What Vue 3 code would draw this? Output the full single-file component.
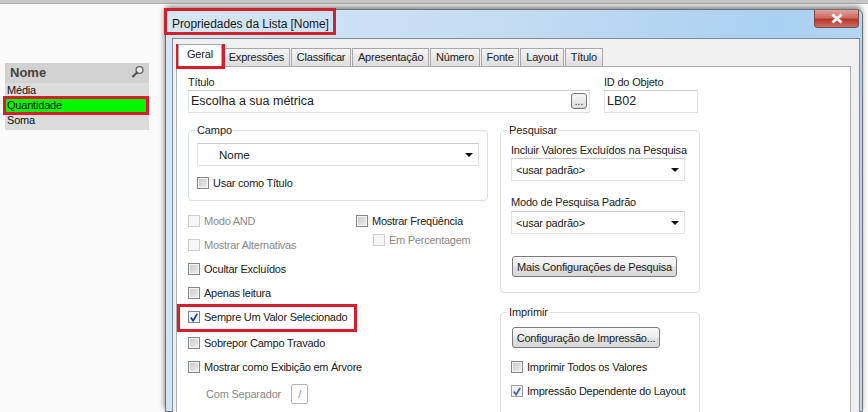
<script setup>
const tabs = ['Geral', 'Expressões', 'Classificar', 'Apresentação', 'Número', 'Fonte', 'Layout', 'Título']
const leftChecks = [
  { t: 'Modo AND', dis: true },
  { t: 'Mostrar Alternativas', dis: true },
  { t: 'Ocultar Excluídos' },
  { t: 'Apenas leitura' },
  { t: 'Sempre Um Valor Selecionado', on: true },
  { t: 'Sobrepor Campo Travado' },
  { t: 'Mostrar como Exibição em Árvore' }
]
</script>

<template>
  <div class="desk">
    <div class="topbar"></div>
    <div class="workspace">
      <aside class="listbox">
        <div class="lb-head">
          <span>Nome</span>
          <svg width="14" height="14" viewBox="0 0 14 14"><circle cx="8.500" cy="5" r="3.400" fill="#eee" stroke="#666" stroke-width="1.400"/><path d="M6 7.500 2 11.500" stroke="#555" stroke-width="2.200" stroke-linecap="round"/></svg>
        </div>
        <div class="lb-row">Média</div>
        <div class="lb-row sel">Quantidade</div>
        <div class="lb-row">Soma</div>
      </aside>

      <section class="dialog">
        <header class="titlebar">
          <span>Propriedades da Lista [Nome]</span>
          <button class="close">
            <svg width="14" height="11" viewBox="0 0 14 11"><path d="M2.500 1.500 11.500 9.500M11.500 1.500 2.500 9.500" stroke="#fff" stroke-width="3"/></svg>
          </button>
        </header>
        <div class="frame">
          <nav class="tabs">
            <div v-for="(t, i) in tabs" :key="t" class="tab" :class="{ active: i === 0 }">{{ t }}</div>
          </nav>
          <div class="pane">
            <div class="title-row">
              <div class="f-title">
                <label>Título</label>
                <div class="input big">
                  <span>Escolha a sua métrica</span>
                  <button class="dots">...</button>
                </div>
              </div>
              <div class="f-id">
                <label>ID do Objeto</label>
                <div class="input"><span>LB02</span></div>
              </div>
            </div>

            <div class="columns">
              <div class="col-left">
                <fieldset class="group campo">
                  <legend>Campo</legend>
                  <div class="select nome"><span>Nome</span><i class="caret"></i></div>
                  <div class="chk"><b class="box"></b>Usar como Título</div>
                </fieldset>

                <div class="checks">
                  <div class="check-list">
                    <div v-for="c in leftChecks" :key="c.t" class="chk" :class="{ dis: c.dis }">
                      <b class="box" :class="{ on: c.on }">
                        <svg v-if="c.on" width="11" height="11" viewBox="0 0 11 11"><path d="M2 5.500 4.500 9 9 1.500" fill="none" stroke="#1c3f94" stroke-width="2"/></svg>
                      </b>{{ c.t }}
                    </div>
                    <div class="sep dis-text">Com Separador <span class="sep-box">/</span></div>
                  </div>
                  <div class="freq">
                    <div class="chk"><b class="box"></b>Mostrar Freqüência</div>
                    <div class="chk dis sub"><b class="box"></b>Em Percentagem</div>
                  </div>
                </div>
              </div>

              <div class="col-right">
                <fieldset class="group pesq">
                  <legend>Pesquisar</legend>
                  <label>Incluir Valores Excluídos na Pesquisa</label>
                  <div class="select"><span>&lt;usar padrão&gt;</span><i class="caret"></i></div>
                  <label class="second">Modo de Pesquisa Padrão</label>
                  <div class="select"><span>&lt;usar padrão&gt;</span><i class="caret"></i></div>
                  <button class="btn more">Mais Configurações de Pesquisa</button>
                </fieldset>
                <fieldset class="group impr">
                  <legend>Imprimir</legend>
                  <button class="btn conf">Configuração de Impressão...</button>
                  <div class="chk"><b class="box"></b>Imprimir Todos os Valores</div>
                  <div class="chk"><b class="box soft">
                    <svg width="11" height="11" viewBox="0 0 11 11"><path d="M2 5.500 4.500 9 9 1.500" fill="none" stroke="#4a5fa5" stroke-width="2"/></svg>
                  </b>Impressão Dependente do Layout</div>
                </fieldset>
              </div>
            </div>
          </div>
        </div>
      </section>
    </div>

    <div class="mark m-title"></div>
    <div class="mark m-tab"></div>
    <div class="mark m-list"></div>
    <div class="mark m-check"></div>
  </div>
</template>

<style>
html, body { margin: 0; padding: 0; background: #fff; }
</style>

<style scoped>
.desk {
  position: relative;
  width: 868px;
  height: 412px;
  overflow: hidden;
  background: #fafafa;
  font: 11px "Liberation Sans", Arial, sans-serif;
  color: #222;
}
.topbar { height: 4px; background: #c6c8c8; border-bottom: 1px solid #b0b2b2; box-sizing: border-box; }
.workspace { display: flex; align-items: flex-start; height: 408px; }

.listbox { width: 144px; margin: 59px 16px 0 5px; background: #dcdcdc; padding-bottom: 2px; flex: none; }
.lb-head {
  height: 20px; background: #d2d2d2; display: flex; align-items: center; justify-content: space-between;
  padding: 0 4px 2px 5px; box-sizing: border-box; font-size: 13px; font-weight: bold; color: #444;
}
.lb-row { height: 15px; line-height: 15px; padding-left: 2px; color: #111; font-size: 11px; letter-spacing: -.2px; }
.lb-row.sel { background: #00f800; margin: 0 3px 0 1px; padding-left: 1px; }

.dialog {
  width: 698px; height: 403px; margin-top: 5px; flex: none; box-sizing: border-box;
  background: linear-gradient(100deg, #d6e6f4 0%, #c3dcf2 45%, #a9d0f2 80%, #bcd9f2 100%);
  border: 1px solid #6b6f73; border-radius: 6px 6px 0 0;
  box-shadow: -1px -3px 5px rgba(60, 60, 60, .55);
  padding: 0 2px 0 6px;
}
.titlebar { height: 28px; display: flex; justify-content: space-between; align-items: flex-start; }
.titlebar > span { margin: 7px 0 0 0; font-size: 12px; color: #1a1a1a; white-space: nowrap; letter-spacing: -.07px; }
.close {
  width: 45px; height: 18px; padding: 0; margin-right: 1px; border: 1px solid #7a4a4a; border-top: 0;
  border-radius: 0 0 4px 4px; display: flex; align-items: center; justify-content: center;
  background: linear-gradient(#e2a39c 0%, #cf6a60 45%, #b8352b 55%, #cc6f64 100%);
}
.frame { height: 375px; box-sizing: border-box; background: #f0f0f0; border: 1px solid #7f8c98; border-bottom: 0; padding: 6px 8px 0 3px; }
.tabs { display: flex; height: 21px; align-items: flex-end; padding-left: 2px; }
.tab {
  height: 18px; box-sizing: border-box; line-height: 17px; padding: 0 4.800px; margin-left: 1px;
  background: linear-gradient(#f6f6f6, #dcdcdc); border: 1px solid #a8a8a8; border-bottom: 0;
  font-size: 11px; color: #222; white-space: nowrap; letter-spacing: -.2px;
}
.tab.active { height: 22px; line-height: 19px; background: #fff; padding: 0 8px; position: relative; z-index: 1; margin-left: 0; }
.pane { height: 346px; background: #fff; border: 1px solid #a9b0b6; border-bottom: 0; box-sizing: border-box; padding: 8px 0 0 11px; }

.title-row { display: flex; gap: 14px; }
label { display: block; line-height: 15px; font-size: 11px; color: #222; white-space: nowrap; letter-spacing: -.2px; }
.input { height: 23px; box-sizing: border-box; border: 1px solid #e0e3e6; border-top-color: #c9cdd0; display: flex; align-items: center; justify-content: space-between; padding: 0 2px 1px; font-size: 12.500px; }
.f-title { width: 402px; }
.f-id { width: 94px; }
.dots { width: 16px; height: 16px; padding: 0; font: 10px "Liberation Sans", sans-serif; border: 1px solid #777; border-radius: 3px; background: linear-gradient(#f7f7f7, #dcdcdc); color: #333; }

.columns { display: flex; gap: 12px; margin-top: 10px; }
.col-left { width: 300px; }
.col-right { width: 200px; }

.group { margin: 0; border: 1px solid #dcdfe3; border-radius: 4px; padding: 0; box-sizing: border-box; min-width: 0; }
.group legend { padding: 0 1px 0 2px; font-size: 11px; line-height: 14px; letter-spacing: -.1px; }
.group.campo { height: 78px; padding: 0 8px; }
.campo legend { margin-left: -2px; }
.pesq legend, .impr legend { margin-left: -4px; }
.select { height: 23px; box-sizing: border-box; border: 1px solid #e2e4e7; border-top-color: #c9cdd0; display: flex; align-items: center; justify-content: space-between; padding: 0 4px; font-size: 11px; letter-spacing: -.2px; }
.select.nome { margin-top: 6px; padding-left: 21px; font-size: 11.500px; letter-spacing: 0; }
.caret { width: 0; height: 0; border: 4px solid transparent; border-top: 4px solid #111; border-bottom: 0; margin-right: 1px; }

.chk { display: flex; align-items: center; gap: 4px; height: 14px; font-size: 11px; color: #222; white-space: nowrap; letter-spacing: -.25px; }
.campo .chk { margin-top: 10px; }
.box {
  width: 12px; height: 12px; box-sizing: border-box; flex: none; display: inline-flex; align-items: center; justify-content: center;
  border: 1px solid #858686; background: linear-gradient(135deg, #c8c8c8, #f0f0f0); box-shadow: inset 0 0 0 1px #f4f4f4;
}
.box.on { background: #eef3fb; }
.box.soft { border-color: #a0a0a0; background: #ececf4; }
.dis { color: #8b8b8b; }
.dis .box { border-color: #cfcfcf; background: #f6f6f6; box-shadow: none; }

.checks { display: flex; margin-top: 13px; }
.check-list { width: 168px; display: flex; flex-direction: column; gap: 10px; }
.check-list .chk:nth-child(6) { margin-top: 2px; }
.freq { display: flex; flex-direction: column; }
.sub { margin: 5px 0 0 17px; }
.sep { display: flex; align-items: center; gap: 10px; margin: 0 0 0 18px; font-size: 11px; color: #8b8b8b; height: 20px; white-space: nowrap; letter-spacing: -.2px; }
.sep-box { width: 17px; height: 20px; box-sizing: border-box; border: 1px solid #b5b5b5; border-radius: 2px; display: flex; align-items: center; justify-content: center; font-size: 11px; }

.group.pesq { height: 170px; padding: 0 14px 0 10px; }
.pesq label:first-of-type { margin-top: 6px; }
.pesq .select { margin-top: 0; }
.pesq .second { margin-top: 14px; }
.pesq .second + .select { margin-top: 1px; }
.btn { display: block; box-sizing: border-box; padding: 0; height: 21px; font: 11px "Liberation Sans", sans-serif; color: #222; border: 1px solid #7c7c7c; border-radius: 3px; background: linear-gradient(#f8f8f8 0%, #efefef 48%, #e2e2e2 52%, #d8d8d8 100%); white-space: nowrap; letter-spacing: -.2px; }
.more { width: 165px; margin: 22px 0 0 1px; }
.group.impr { height: 120px; margin-top: 12px; padding: 0 10px; }
.conf { width: 148px; margin: 8px 0 12px 1px; }
.impr .chk { margin-bottom: 10px; }

.mark { position: absolute; border: 3px solid #d3202a; box-sizing: border-box; pointer-events: none; }
.m-title { left: 164px; top: 8px; width: 172px; height: 27px; }
.m-tab { left: 176px; top: 44px; width: 49px; height: 25px; }
.m-list { left: 3px; top: 96px; width: 146px; height: 19px; }
.m-check { left: 177px; top: 304px; width: 180px; height: 28px; }
</style>
